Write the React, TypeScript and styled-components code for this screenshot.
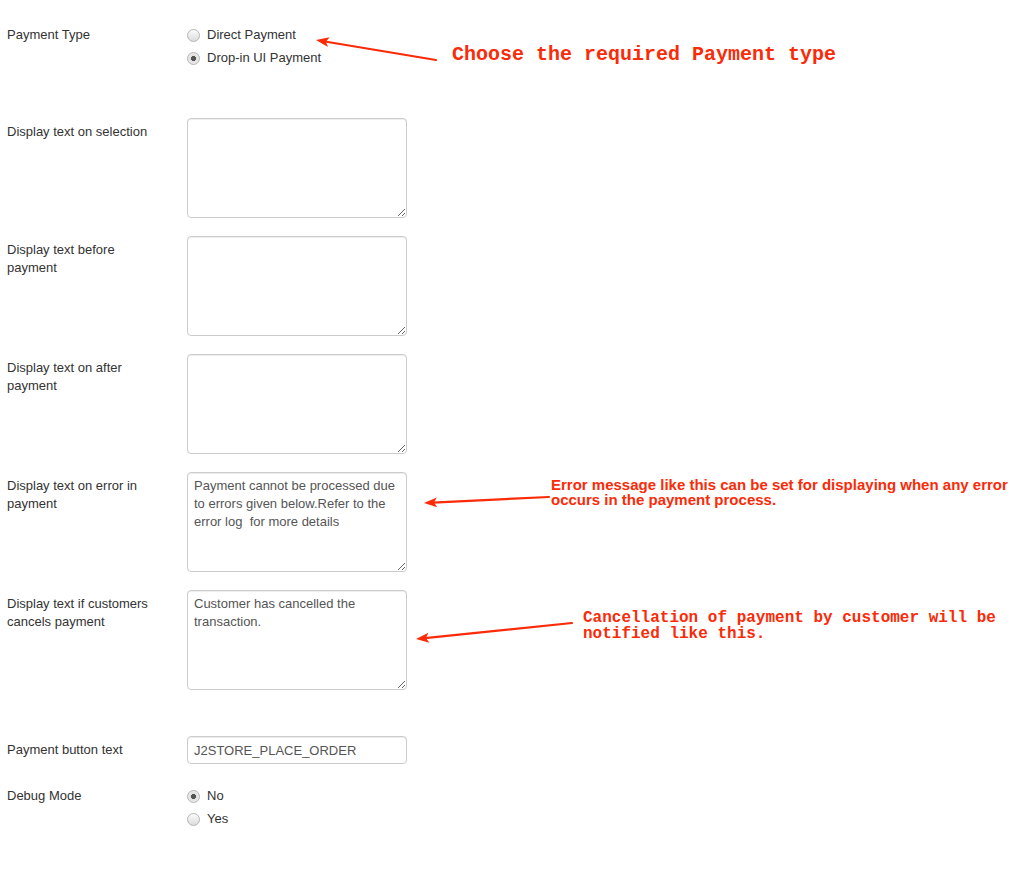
import React from "react";
import styled, { createGlobalStyle } from "styled-components";

const GlobalStyle = createGlobalStyle`
  html, body { margin: 0; padding: 0; background: #ffffff; }
  body { font-family: "Liberation Sans", Arial, sans-serif; font-size: 13px; line-height: 18px; color: #333333; }
`;

const Page = styled.div`
  position: relative;
  width: 1034px;
  height: 880px;
  overflow: hidden;
`;

const Form = styled.form`
  padding: 21px 0 0 7px;
`;

const ControlGroup = styled.div<{ $after?: number }>`
  display: flex;
  align-items: flex-start;
  margin-bottom: ${(p) => p.$after ?? 18}px;
`;

const ControlLabel = styled.label`
  flex: 0 0 160px;
  width: 160px;
  margin-right: 20px;
  padding-top: 5px;
  font-size: 13px;
  line-height: 18px;
  color: #333333;
`;

const Controls = styled.div`
  display: flex;
  flex-direction: column;
`;

const RadioLabel = styled.label`
  display: flex;
  align-items: center;
  min-height: 18px;
  padding-top: 5px;
  font-size: 13px;
  line-height: 18px;
  color: #333333;
`;

const RadioInput = styled.input.attrs({ type: "radio" })`
  appearance: none;
  -webkit-appearance: none;
  box-sizing: border-box;
  width: 13px;
  height: 13px;
  margin: 1px 7px 0 0;
  border: 1px solid #b5b5b5;
  border-radius: 50%;
  background: linear-gradient(#fbfbfb, #dcdcdc);
  position: relative;
  &:checked {
    background: radial-gradient(circle, #555555 0 2.3px, #e0e0e0 2.8px, #f3f3f3 100%);
  }
`;

const TextArea = styled.textarea`
  box-sizing: border-box;
  width: 220px;
  height: 100px;
  margin: 0;
  padding: 4px 6px;
  border: 1px solid #cccccc;
  border-radius: 4px;
  box-shadow: inset 0 1px 1px rgba(0, 0, 0, 0.075);
  font-family: "Liberation Sans", Arial, sans-serif;
  font-size: 13px;
  line-height: 18px;
  color: #555555;
  background: #ffffff;
  display: block;
`;

const TextInput = styled.input`
  box-sizing: border-box;
  width: 220px;
  height: 28px;
  margin: 0;
  padding: 4px 6px;
  border: 1px solid #cccccc;
  border-radius: 4px;
  box-shadow: inset 0 1px 1px rgba(0, 0, 0, 0.075);
  font-family: "Liberation Sans", Arial, sans-serif;
  font-size: 13px;
  line-height: 18px;
  color: #555555;
  background: #ffffff;
`;

const Note = styled.div<{ $mono?: boolean; $size: number; $lh: number; $left: number; $top: number }>`
  position: absolute;
  left: ${(p) => p.$left}px;
  top: ${(p) => p.$top}px;
  font-family: ${(p) => (p.$mono ? '"Liberation Mono", "Courier New", monospace' : '"Liberation Sans", Arial, sans-serif')};
  font-weight: bold;
  font-size: ${(p) => p.$size}px;
  line-height: ${(p) => p.$lh}px;
  color: #fb2a08;
  white-space: pre;
`;

const Arrows = styled.svg`
  position: absolute;
  left: 0;
  top: 0;
  pointer-events: none;
`;

type ArrowProps = { x1: number; y1: number; x2: number; y2: number };
const Arrow = ({ x1, y1, x2, y2 }: ArrowProps) => {
  const dx = x2 - x1;
  const dy = y2 - y1;
  const len = Math.hypot(dx, dy);
  const ux = dx / len;
  const uy = dy / len;
  const hl = 13;
  const hw = 5;
  const bx = x2 - ux * hl;
  const by = y2 - uy * hl;
  const px = -uy;
  const py = ux;
  const pts = `${x2},${y2} ${bx + px * hw},${by + py * hw} ${bx + ux * 3},${by + uy * 3} ${bx - px * hw},${by - py * hw}`;
  return (
    <g>
      <line x1={x1} y1={y1} x2={bx + ux * 4} y2={by + uy * 4} stroke="#fb2a08" strokeWidth={2.2} strokeLinecap="round" />
      <polygon points={pts} fill="#fb2a08" />
    </g>
  );
};

const textRows: { label: string; value: string }[] = [
  { label: "Display text on selection", value: "" },
  { label: "Display text before payment", value: "" },
  { label: "Display text on after payment", value: "" },
  {
    label: "Display text on error in payment",
    value: "Payment cannot be processed due to errors given below.Refer to the error log  for more details",
  },
  { label: "Display text if customers cancels payment", value: "Customer has cancelled the transaction." },
];

export default function App() {
  return (
    <Page>
      <GlobalStyle />
      <Form onSubmit={(e) => e.preventDefault()}>
        <ControlGroup $after={51}>
          <ControlLabel>Payment Type</ControlLabel>
          <Controls>
            <RadioLabel>
              <RadioInput name="ptype" />
              Direct Payment
            </RadioLabel>
            <RadioLabel>
              <RadioInput name="ptype" defaultChecked />
              Drop-in UI Payment
            </RadioLabel>
          </Controls>
        </ControlGroup>

        {textRows.map((r, i) => (
          <ControlGroup key={r.label} $after={i === textRows.length - 1 ? 46 : 18}>
            <ControlLabel>{r.label}</ControlLabel>
            <Controls>
              <TextArea defaultValue={r.value} />
            </Controls>
          </ControlGroup>
        ))}

        <ControlGroup>
          <ControlLabel>Payment button text</ControlLabel>
          <Controls>
            <TextInput type="text" defaultValue="J2STORE_PLACE_ORDER" />
          </Controls>
        </ControlGroup>

        <ControlGroup>
          <ControlLabel>Debug Mode</ControlLabel>
          <Controls>
            <RadioLabel>
              <RadioInput name="debug" defaultChecked />
              No
            </RadioLabel>
            <RadioLabel>
              <RadioInput name="debug" />
              Yes
            </RadioLabel>
          </Controls>
        </ControlGroup>
      </Form>

      <Note $mono $size={20} $lh={24} $left={452} $top={43}>
        Choose the required Payment type
      </Note>
      <Note $size={15} $lh={15} $left={551} $top={477}>
        {"Error message like this can be set for displaying when any error\noccurs in the payment process."}
      </Note>
      <Note $mono $size={16} $lh={16} $left={583} $top={610}>
        {"Cancellation of payment by customer will be\nnotified like this."}
      </Note>

      <Arrows width={1034} height={880} viewBox="0 0 1034 880">
        <Arrow x1={436} y1={60} x2={316} y2={40} />
        <Arrow x1={549} y1={497} x2={424} y2={503} />
        <Arrow x1={572} y1={623} x2={416} y2={639} />
      </Arrows>
    </Page>
  );
}
